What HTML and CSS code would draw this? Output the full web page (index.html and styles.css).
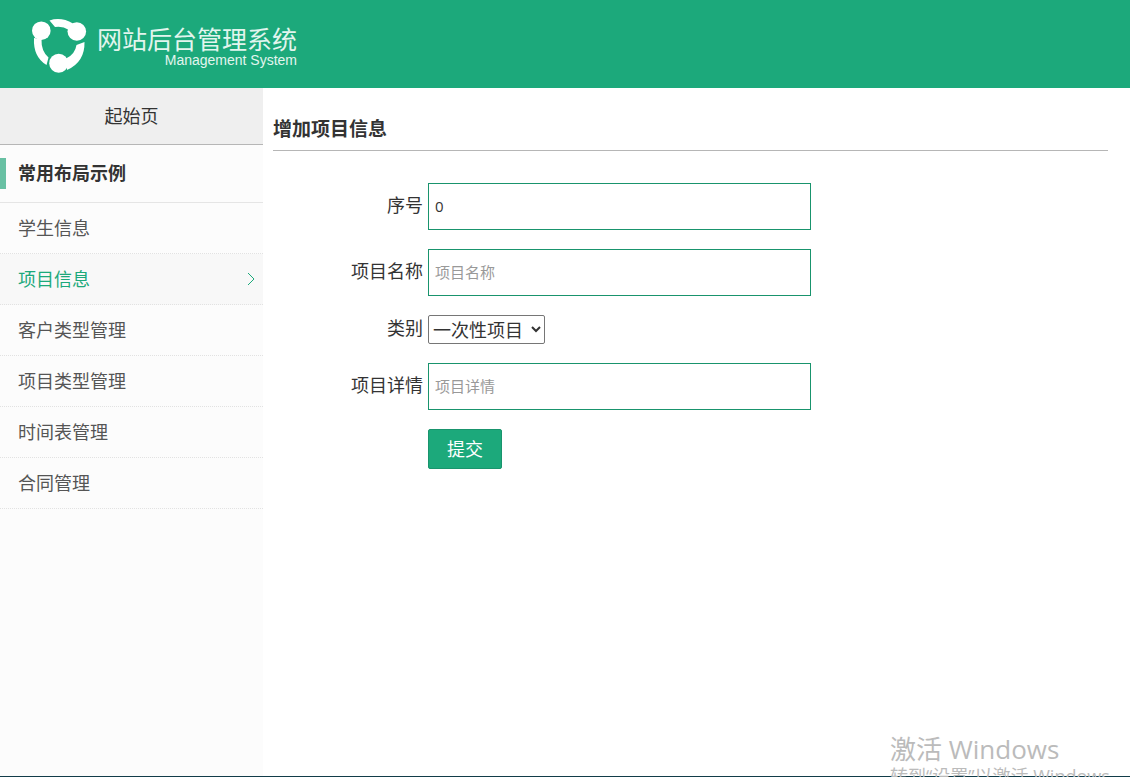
FILE: index.html
```
<!DOCTYPE html>
<html lang="zh-CN">
<head>
<meta charset="utf-8">
<meta name="viewport" content="width=device-width, initial-scale=1">
<title>网站后台管理系统</title>
<link rel="stylesheet" href="styles.css">
</head>
<body>
<header class="header">
  <svg class="logo-mark" viewBox="0 0 56 56" aria-hidden="true">
    <g fill="#fff">
      <path d="M18.500 2.500Q30 -1.500 42 5.500L38 12Q31 7.500 24 9Z"/>
      <path d="M3 20L10.500 21Q10 33 17.500 39.500L15.500 47Q2 39 3 20Z"/>
      <path d="M53.500 24L45.500 27Q44 36.500 35 40.500L36 52Q54 44 53.500 24Z"/>
      <circle cx="10.300" cy="12.700" r="9.300"/>
      <circle cx="45.800" cy="13.500" r="9.300"/>
      <circle cx="27.700" cy="45.300" r="9.500"/>
    </g>
  </svg>
  <div class="brand">
    <span class="brand-title">网站后台管理系统</span>
    <span class="brand-sub">Management System</span>
  </div>
</header>
<div class="layout">
  <nav class="sidebar">
    <a class="home" href="#">起始页</a>
    <h2 class="section">常用布局示例</h2>
    <ul class="menu">
      <li><a class="item" href="#">学生信息</a></li>
      <li><a class="item active" href="#" aria-current="page">项目信息
        <svg class="arrow" viewBox="0 0 8 14" aria-hidden="true"><path d="M1 1L7 7L1 13" fill="none" stroke="currentColor"/></svg></a></li>
      <li><a class="item" href="#">客户类型管理</a></li>
      <li><a class="item" href="#">项目类型管理</a></li>
      <li><a class="item" href="#">时间表管理</a></li>
      <li><a class="item" href="#">合同管理</a></li>
    </ul>
  </nav>
  <main class="main">
    <h1 class="title">增加项目信息</h1>
    <form class="form">
      <div class="row">
        <label class="label" for="no">序号</label>
        <input class="input" id="no" type="text" value="0">
      </div>
      <div class="row">
        <label class="label" for="name">项目名称</label>
        <input class="input" id="name" type="text" placeholder="项目名称">
      </div>
      <div class="row">
        <label class="label" for="kind">类别</label>
        <select class="select" id="kind"><option>一次性项目</option></select>
      </div>
      <div class="row">
        <label class="label" for="detail">项目详情</label>
        <input class="input" id="detail" type="text" placeholder="项目详情">
      </div>
      <div class="row actions">
        <button class="submit" type="button">提交</button>
      </div>
    </form>
  </main>
</div>
<div class="watermark">
  <p class="mark-title">激活 Windows</p>
  <p class="mark-text">转到“设置”以激活 Windows。</p>
</div>
</body>
</html>
```
FILE: styles.css
```
* {
  box-sizing: border-box;
}

body {
  margin: 0;
  min-height: 100vh;
  display: flex;
  flex-direction: column;
  border-bottom: 1px solid #123c49;
  background: #fff;
  color: #333;
  font-family: "Open Sans", "Noto Sans CJK SC", sans-serif;
  font-size: 18px;
  line-height: 24px;
}

.header {
  display: flex;
  align-items: center;
  gap: 10px;
  height: 88px;
  padding: 4px 31px 0;
  background: #1ca97b;
  color: #e2f5ee;
}

.logo-mark {
  width: 56px;
  height: 56px;
}

.brand {
  display: flex;
  flex-direction: column;
}

.brand-title {
  font-family: "Noto Sans CJK SC", sans-serif;
  font-size: 25px;
  line-height: 28px;
}

.brand-sub {
  font-family: "Liberation Sans", Arial, sans-serif;
  font-size: 14px;
  line-height: 16px;
  text-align: right;
}

.layout {
  display: flex;
  flex: 1;
}

.sidebar {
  flex: none;
  width: 263px;
  background: #fcfcfc;
}

.home {
  display: block;
  padding: 16px;
  border-bottom: 1px solid #b6b6b6;
  background: #efefef;
  color: #333;
  text-align: center;
  text-decoration: none;
}

.section {
  margin: 0;
  padding: 13px 0;
  border-bottom: 1px solid #e5e5e5;
  font-size: 18px;
  line-height: 31px;
}

.section::before {
  content: "";
  display: inline-block;
  width: 6px;
  height: 31px;
  margin-right: 12px;
  background: #68c0a3;
  vertical-align: top;
}

.menu {
  margin: 0;
  padding: 0;
  list-style: none;
}

.item {
  display: flex;
  align-items: center;
  justify-content: space-between;
  height: 51px;
  padding: 0 8px 0 18px;
  border-bottom: 1px dotted #e2e2e2;
  color: #555;
  text-decoration: none;
}

.active {
  background: #f8f8f8;
  color: #1ca97b;
}

.arrow {
  width: 8px;
  height: 14px;
}

.main {
  flex: 1;
  padding: 29px 22px 0 10px;
}

.title {
  margin: 0;
  padding-bottom: 9px;
  border-bottom: 1px solid #b6b6b6;
  font-size: 19px;
  line-height: 24px;
}

.form {
  display: grid;
  gap: 19px;
  margin-top: 32px;
}

.row {
  display: flex;
  align-items: center;
  gap: 5px;
}

.label {
  width: 150px;
  padding-bottom: 4px;
  text-align: right;
}

.input {
  width: 383px;
  height: 47px;
  padding: 0 6px 2px;
  border: 1px solid #19946d;
  background: #fff;
  color: #333;
  font: inherit;
  font-size: 15px;
}

.input::placeholder {
  color: #999;
}

.select {
  width: 117px;
  height: 29px;
  padding: 0;
  border: 1px solid #767676;
  border-radius: 2px;
  background: #fff;
  color: #333;
  font: inherit;
}

.actions {
  padding-left: 155px;
}

.submit {
  height: 40px;
  padding: 0 18px;
  border: 1px solid #19946d;
  border-radius: 2px;
  background: #1ca97b;
  color: #fff;
  font: inherit;
}

.watermark {
  position: absolute;
  right: 0;
  bottom: 0;
  width: 240px;
  height: 43px;
  overflow: hidden;
  color: #bbb;
  white-space: nowrap;
  pointer-events: none;
}

.mark-title {
  margin: 0;
  font-size: 26px;
  line-height: 30px;
}

.mark-text {
  margin: 0;
  font-size: 18px;
  line-height: 24px;
}
```
